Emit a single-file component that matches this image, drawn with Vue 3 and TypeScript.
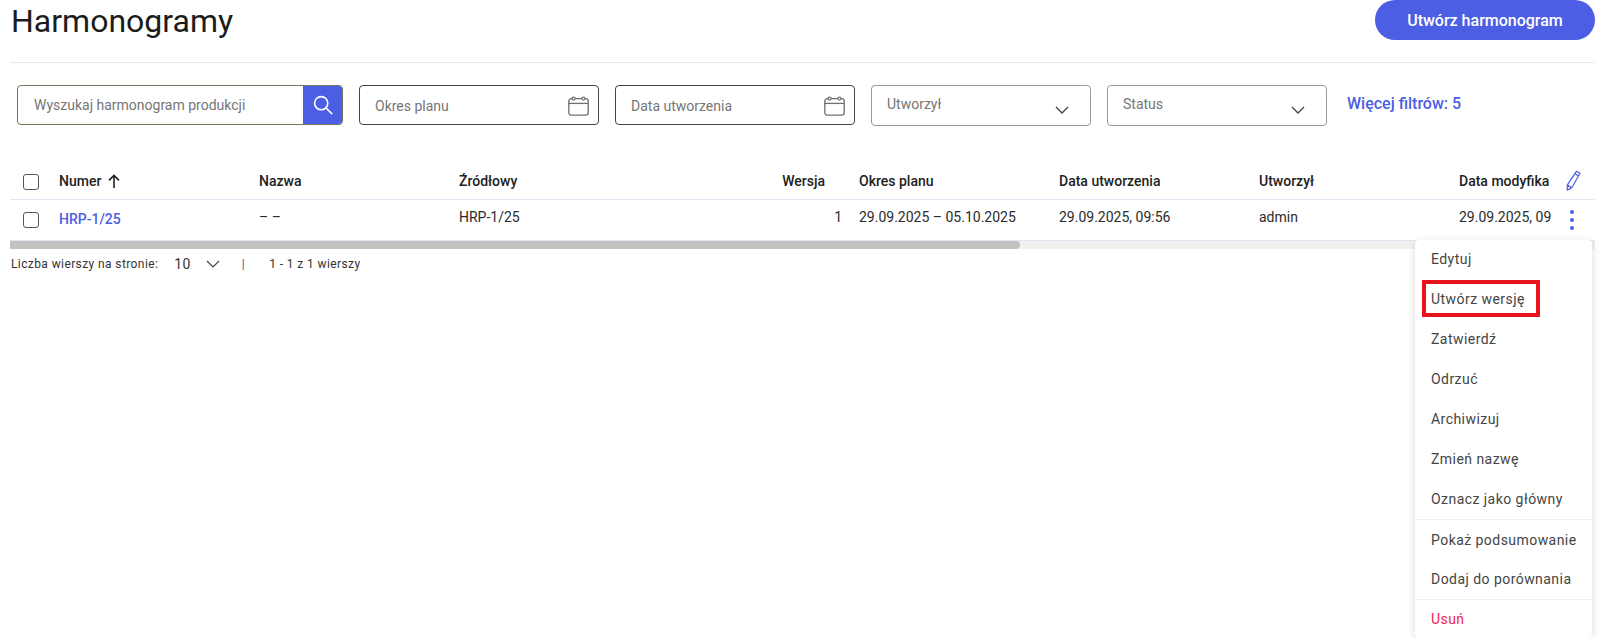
<script setup lang="ts">
interface Column { label: string; value: string; kind?: string }
const columns: Column[] = [
  { label: 'Nazwa', value: '– –' },
  { label: 'Źródłowy', value: 'HRP-1/25' },
  { label: 'Wersja', value: '1', kind: 'num' },
  { label: 'Okres planu', value: '29.09.2025 – 05.10.2025' },
  { label: 'Data utworzenia', value: '29.09.2025, 09:56' },
  { label: 'Utworzył', value: 'admin' },
  { label: 'Data modyfikacji', value: '29.09.2025, 09:56', kind: 'clip' },
]
const dates = ['Okres planu', 'Data utworzenia']
const selects = ['Utworzył', 'Status']
const groups: { text: string; marked?: boolean; danger?: boolean }[][] = [
  [
    { text: 'Edytuj' },
    { text: 'Utwórz wersję', marked: true },
    { text: 'Zatwierdź' },
    { text: 'Odrzuć' },
    { text: 'Archiwizuj' },
    { text: 'Zmień nazwę' },
    { text: 'Oznacz jako główny' },
  ],
  [{ text: 'Pokaż podsumowanie' }, { text: 'Dodaj do porównania' }],
  [{ text: 'Usuń', danger: true }],
]
</script>

<template>
  <div class="page">
    <header class="top">
      <h1>Harmonogramy</h1>
      <button class="create">Utwórz harmonogram</button>
    </header>

    <section class="filters">
      <div class="search">
        <span class="ph">Wyszukaj harmonogram produkcji</span>
        <span class="search-btn">
          <svg width="20" height="20" viewBox="0 0 20 20" fill="none" stroke="#fff" stroke-width="1.6">
            <circle cx="8.2" cy="8.2" r="6.6" />
            <path d="M13 13l5.8 5.6" stroke-linecap="round" />
          </svg>
        </span>
      </div>
      <div v-for="d in dates" :key="d" class="date">
        <span class="ph">{{ d }}</span>
        <svg width="21" height="20" viewBox="0 0 21 20" fill="none" stroke="#6f6f6f" stroke-width="1.3">
          <rect x="0.8" y="2.6" width="19.4" height="16.6" rx="2.6" />
          <path d="M0.8 7.4h19.4" />
          <circle cx="5.6" cy="2.6" r="1.5" fill="#fff" />
          <circle cx="15.4" cy="2.6" r="1.5" fill="#fff" />
        </svg>
      </div>
      <div v-for="s in selects" :key="s" class="select">
        <span class="ph">{{ s }}</span>
        <svg class="chev" width="14" height="8" viewBox="0 0 14 8" fill="none" stroke="#444" stroke-width="1.3">
          <path d="M1 1l6 6 6-6" />
        </svg>
      </div>
      <a class="more">Więcej filtrów: 5</a>
    </section>

    <section class="table">
      <div class="row head">
        <span class="check-cell"><i class="box"></i></span>
        <span class="cell first">
          Numer
          <svg class="arrow" width="12" height="14" viewBox="0 0 12 14" fill="none" stroke="#222" stroke-width="1.6">
            <path d="M6 14V1.4M1 6.4l5-5 5 5" />
          </svg>
        </span>
        <span v-for="c in columns" :key="c.label" class="cell" :class="c.kind">{{ c.label }}</span>
        <span class="act">
          <svg class="pen" width="15" height="21" viewBox="0 0 15 21" fill="none" stroke="#4b5ee4" stroke-width="1.2" stroke-linejoin="round">
            <path d="M10.4 1.3l3.6 2-8.2 14.4-4.6 2.4 0.2-5.2zM1.4 14.9l4.4 2.8M9 3.8l3.6 2.1" />
          </svg>
        </span>
      </div>
      <div class="row body">
        <span class="check-cell"><i class="box"></i></span>
        <span class="cell first link">HRP-1/25</span>
        <span v-for="c in columns" :key="c.label" class="cell" :class="c.kind">{{ c.value }}</span>
        <span class="act dots"><i></i><i></i><i></i></span>
      </div>
      <div class="scroll"><div class="thumb"></div></div>
    </section>

    <footer class="pager">
      <span>Liczba wierszy na stronie:</span>
      <span class="size">10</span>
      <svg class="pchev" width="14" height="8" viewBox="0 0 14 8" fill="none" stroke="#444" stroke-width="1.2">
        <path d="M1 1l6 6 6-6" />
      </svg>
      <span class="sep">|</span>
      <span>1 - 1 z 1 wierszy</span>
    </footer>

    <nav class="menu">
      <div v-for="(g, i) in groups" :key="i" class="group">
        <div v-for="it in g" :key="it.text" class="item" :class="{ danger: it.danger }">
          {{ it.text }}
          <span v-if="it.marked" class="mark"></span>
        </div>
      </div>
    </nav>
  </div>
</template>

<style>
html, body { margin: 0; overflow: hidden; background: #fff; }
</style>

<style scoped>
.page {
  position: relative;
  width: 1613px;
  height: 638px;
  overflow: hidden;
  box-sizing: border-box;
  padding: 0 18px 0 10px;
  font-family: Roboto, "Liberation Sans", sans-serif;
  color: #2b2b2b;
  background: #fff;
}
.top {
  display: flex;
  justify-content: space-between;
  align-items: flex-start;
  height: 62px;
  border-bottom: 1px solid #e6e6f6;
}
h1 {
  margin: 0 0 0 1px;
  font-size: 32px;
  font-weight: 400;
  line-height: 42px;
  color: #1c1c1c;
}
.create {
  width: 220px;
  height: 40px;
  border: 0;
  border-radius: 20px;
  background: #4b5ee4;
  color: #fff;
  font: 500 16px Roboto, sans-serif;
  padding: 0;
}
.filters {
  display: flex;
  align-items: flex-start;
  margin-top: 22px;
  padding-left: 7px;
}
.ph {
  font-size: 14px;
  color: #767676;
  white-space: nowrap;
}
.search {
  display: flex;
  align-items: center;
  justify-content: space-between;
  box-sizing: border-box;
  width: 326px;
  height: 40px;
  margin-right: 16px;
  padding-left: 16px;
  border: 1px solid #75755f;
  border-radius: 4px;
  overflow: hidden;
}
.search-btn {
  display: flex;
  align-items: center;
  justify-content: center;
  width: 40px;
  height: 40px;
  margin-right: -1px;
  background: #4b5ee4;
}
.date {
  display: flex;
  align-items: center;
  justify-content: space-between;
  box-sizing: border-box;
  width: 240px;
  height: 40px;
  margin-right: 16px;
  padding: 1px 9px 0 15px;
  border: 1px solid #444;
  border-radius: 4px;
}
.select {
  display: flex;
  align-items: center;
  justify-content: space-between;
  box-sizing: border-box;
  width: 220px;
  height: 41px;
  margin-right: 16px;
  padding: 0 21px 0 15px;
  border: 1px solid #999;
  border-radius: 4px;
}
.select .ph { margin-top: -3px; }
.chev { margin-top: 8px; }
.more {
  margin: 9px 0 0 4px;
  font-size: 16px;
  font-weight: 500;
  line-height: 20px;
  color: #4b5ee4;
}
.table {
  margin-top: 38px;
}
.row {
  display: grid;
  grid-template-columns: 49px repeat(7, 200px) 92px 44px;
  align-items: center;
  font-size: 14px;
  border-bottom: 1px solid #e4e4f4;
}
.row.head { height: 35px; font-weight: 500; color: #222; }
.row.body { height: 40px; }
.row .cell { white-space: nowrap; overflow: hidden; }
.row.head .cell { margin-top: -2px; }
.row.head .cell.clip { width: 90px; }
.row .cell.num { text-align: right; padding-right: 17px; }
.row.head .cell.num { padding-right: 34px; }
.row.body .cell { margin-top: -6px; }
.row.body .cell.link { margin-top: -2px; color: #4b5ee4; font-weight: 500; }
.check-cell { display: flex; padding-left: 13px; }
.box {
  display: block;
  box-sizing: border-box;
  width: 16px;
  height: 16px;
  border: 1px solid #555;
  border-radius: 3px;
}
.first { display: flex; align-items: center; gap: 7px; }
.arrow { margin-top: 1px; }
.act { display: flex; justify-content: center; padding-right: 3px; }
.pen { margin: -3px 0 0 3px; }
.dots { flex-direction: column; align-items: center; gap: 4px; }
.dots i {
  display: block;
  width: 4px;
  height: 4px;
  border-radius: 50%;
  background: #4b5ee4;
}
.scroll {
  height: 8px;
  background: #f0f0f0;
}
.thumb {
  width: 1010px;
  height: 8px;
  border-radius: 0 4px 4px 0;
  background: #c1c1c1;
}
.pager {
  display: flex;
  align-items: center;
  margin: 5px 0 0 1px;
  height: 20px;
  font-size: 12px;
  letter-spacing: 0.4px;
  color: #333;
  white-space: nowrap;
}
.size { margin-left: 16px; font-size: 14px; }
.pchev { margin-left: 15px; }
.sep { margin: 0 24px 0 22px; color: #6a3a90; }
.menu {
  position: absolute;
  top: 240px;
  left: 1415px;
  width: 177px;
  background: #fff;
  border-radius: 4px;
  box-shadow: 0 2px 8px rgba(0, 0, 0, 0.14);
}
.group + .group { border-top: 1px solid #efefef; }
.group:first-child { margin-top: -1px; }
.item {
  position: relative;
  display: flex;
  align-items: center;
  height: 40px;
  padding-left: 16px;
  font-size: 14px;
  letter-spacing: 0.45px;
  color: #444;
  white-space: nowrap;
}
.group:nth-child(2) .item:first-child { height: 39px; }
.group:nth-child(3) .item { height: 38px; }
.danger { color: #e8274f; }
.mark {
  position: absolute;
  left: 7px;
  top: 1px;
  width: 118px;
  height: 37px;
  box-sizing: border-box;
  border: 4px solid #e8141c;
}
</style>
